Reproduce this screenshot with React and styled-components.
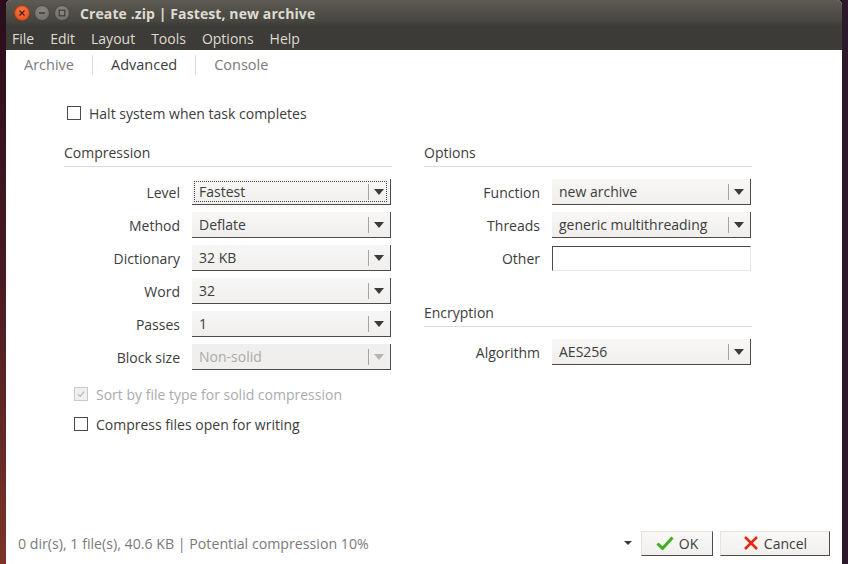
import React from 'react';
import styled, { createGlobalStyle } from 'styled-components';

const GlobalStyle = createGlobalStyle`
  html, body {
    margin: 0;
    padding: 0;
    width: 848px;
    height: 564px;
    overflow: hidden;
    background: linear-gradient(180deg, #2a0d1c 0%, #4a1a22 50%, #7b3427 100%);
    font-family: "Open Sans", "Noto Sans", sans-serif;
  }
`;

const Desktop = styled.div`
  display: flex;
  height: 564px;
`;

const DesktopLeft = styled.div`
  width: 6px;
  flex: none;
`;

const DesktopRight = styled.div`
  width: 6px;
  flex: none;
  background: #2c1a2a;
`;

const Window = styled.div`
  width: 836px;
  display: flex;
  flex-direction: column;
  background: #ffffff;
  border-radius: 5px 5px 0 0;
  overflow: hidden;
`;

const TitleBar = styled.div`
  height: 26px;
  display: flex;
  align-items: center;
  background: linear-gradient(180deg, #5d5b52 0%, #47463f 80%, #3c3b37 100%);
  padding-left: 8px;
  gap: 4px;
`;

const WinButton = styled.div`
  width: 14px;
  height: 14px;
  border-radius: 50%;
  display: flex;
  align-items: center;
  justify-content: center;
  background: ${p => (p.$close ? 'radial-gradient(circle at 50% 35%, #f47a4b, #df4a17)' : 'radial-gradient(circle at 50% 35%, #8a8880, #6b6a64)')};
  border: 1px solid ${p => (p.$close ? '#b13a10' : '#4a4944')};
  flex: none;
`;

const Title = styled.div`
  margin-left: 6px;
  color: #dfdbd2;
  font-weight: 700;
  font-size: 14px;
  letter-spacing: 0.1px;
`;

const MenuBar = styled.div`
  height: 24px;
  display: flex;
  align-items: center;
  background: #3c3b37;
`;

const MenuItem = styled.div`
  color: #dfdbd2;
  font-size: 14px;
  padding: 0 8px;

  &:first-child {
    padding-left: 6px;
  }
`;

const Tabs = styled.div`
  height: 30px;
  display: flex;
  align-items: center;
`;

const Tab = styled.div`
  font-size: 14.5px;
  color: ${p => (p.$active ? '#3c3c3c' : '#7a7a7a')};
  padding: 0 18px;
  border-left: ${p => (p.$first ? 'none' : '1px solid #e0e0e0')};
  height: 20px;
  line-height: 20px;
  display: flex;
  align-items: center;
`;

const Content = styled.div`
  flex: 1;
  display: flex;
  flex-direction: column;
  padding-left: 58px;
`;

const CheckRow = styled.label`
  display: flex;
  align-items: center;
  gap: 8px;
  font-size: 14px;
  color: ${p => (p.$disabled ? '#ababab' : '#3c3c3c')};
  margin-left: ${p => p.$indent || 0}px;
  margin-top: ${p => p.$top || 0}px;
  height: 20px;
`;

const Box = styled.span`
  width: 12px;
  height: 12px;
  border: 1px solid ${p => (p.$disabled ? '#c8c8c8' : '#4a4a4a')};
  background: ${p => (p.$disabled ? '#f0f0f0' : '#ffffff')};
  display: flex;
  align-items: center;
  justify-content: center;
  flex: none;
`;

const Columns = styled.div`
  display: flex;
  gap: 32px;
  margin-top: 20px;
`;

const Column = styled.div`
  width: 328px;
  display: flex;
  flex-direction: column;
`;

const Heading = styled.div`
  font-size: 14px;
  color: #3c3c3c;
  height: 20px;
  line-height: 20px;
  padding-bottom: 3px;
  border-bottom: 1px solid #dadada;
  margin-top: ${p => p.$top || 0}px;
`;

const Fields = styled.div`
  display: flex;
  flex-direction: column;
  gap: 7px;
  margin-top: 12px;
`;

const Field = styled.div`
  display: flex;
  align-items: center;
  gap: 12px;
  height: 26px;
`;

const Label = styled.div`
  width: 116px;
  text-align: right;
  font-size: 14px;
  color: #3c3c3c;
`;

const ComboBox = styled.div`
  position: relative;
  width: 199px;
  height: 26px;
  box-sizing: border-box;
  display: flex;
  align-items: center;
  background: ${p => (p.$disabled ? '#f0efed' : 'linear-gradient(180deg, #f8f7f6 0%, #f0efed 100%)')};
  border-right: 1px solid #4c4b47;
  border-bottom: 1px solid #4c4b47;
  font-size: 14px;
  color: ${p => (p.$disabled ? '#ababab' : '#3c3c3c')};
`;

const ComboText = styled.div`
  flex: 1;
  padding-left: 7px;
  white-space: nowrap;
`;

const Focus = styled.div`
  position: absolute;
  left: 2px;
  top: 2px;
  right: 3px;
  bottom: 2px;
  border: 1px dotted #444;
  pointer-events: none;
`;

const ArrowSep = styled.div`
  width: 1px;
  height: 16px;
  background: #a5a5a5;
  margin-right: 5px;
`;

const Arrow = styled.div`
  width: 0;
  height: 0;
  border-left: 5px solid transparent;
  border-right: 5px solid transparent;
  border-top: 6px solid ${p => (p.$disabled ? '#b5b5b5' : '#3c3b37')};
  margin-right: 6px;
`;

const TextInput = styled.div`
  width: 199px;
  height: 25px;
  box-sizing: border-box;
  background: #ffffff;
  border-left: 1px solid #4c4b47;
  border-top: 1px solid #4c4b47;
  border-right: 1px solid #e6e6e6;
  border-bottom: 1px solid #e6e6e6;
`;

const StatusBar = styled.div`
  height: 42px;
  display: flex;
  align-items: center;
  padding: 0 12px;
`;

const StatusText = styled.div`
  flex: 1;
  font-size: 14.2px;
  color: #7a7a7a;
`;

const SmallArrow = styled.div`
  width: 0;
  height: 0;
  border-left: 4px solid transparent;
  border-right: 4px solid transparent;
  border-top: 4px solid #3c3b37;
  margin-right: 9px;
`;

const Button = styled.div`
  width: ${p => p.$w}px;
  height: 25px;
  box-sizing: border-box;
  display: flex;
  align-items: center;
  justify-content: center;
  gap: 5px;
  background: linear-gradient(180deg, #f9f8f7 0%, #f1f0ee 100%);
  border-right: 1px solid #4c4b47;
  border-bottom: 1px solid #4c4b47;
  border-top: 1px solid #e4e3e0;
  border-left: 1px solid #e4e3e0;
  font-size: 14px;
  color: #3c3c3c;
  margin-left: ${p => p.$ml || 0}px;
`;

function Combo({ value, disabled, focused }) {
  return (
    <ComboBox $disabled={disabled}>
      <ComboText>{value}</ComboText>
      <ArrowSep />
      <Arrow $disabled={disabled} />
      {focused && <Focus />}
    </ComboBox>
  );
}

function Row({ label, children }) {
  return (
    <Field>
      <Label>{label}</Label>
      {children}
    </Field>
  );
}

export default function App() {
  return (
    <>
      <GlobalStyle />
      <Desktop>
        <DesktopLeft />
        <Window>
          <TitleBar>
            <WinButton $close>
              <svg width="8" height="8" viewBox="0 0 8 8">
                <path d="M1.5 1.5 L6.5 6.5 M6.5 1.5 L1.5 6.5" stroke="#5a1a05" strokeWidth="1.3" />
              </svg>
            </WinButton>
            <WinButton>
              <svg width="8" height="8" viewBox="0 0 8 8">
                <path d="M1 4 H7" stroke="#3c3b37" strokeWidth="1.4" />
              </svg>
            </WinButton>
            <WinButton>
              <svg width="8" height="8" viewBox="0 0 8 8">
                <rect x="1.2" y="1.2" width="5.6" height="5.6" fill="none" stroke="#3c3b37" strokeWidth="1.2" />
              </svg>
            </WinButton>
            <Title>Create .zip | Fastest, new archive</Title>
          </TitleBar>
          <MenuBar>
            {['File', 'Edit', 'Layout', 'Tools', 'Options', 'Help'].map(m => (
              <MenuItem key={m}>{m}</MenuItem>
            ))}
          </MenuBar>
          <Tabs>
            <Tab $first>Archive</Tab>
            <Tab $active>Advanced</Tab>
            <Tab>Console</Tab>
          </Tabs>
          <Content>
            <CheckRow $indent={3} $top={23}>
              <Box />
              Halt system when task completes
            </CheckRow>
            <Columns>
              <Column>
                <Heading>Compression</Heading>
                <Fields>
                  <Row label="Level"><Combo value="Fastest" focused /></Row>
                  <Row label="Method"><Combo value="Deflate" /></Row>
                  <Row label="Dictionary"><Combo value="32 KB" /></Row>
                  <Row label="Word"><Combo value="32" /></Row>
                  <Row label="Passes"><Combo value="1" /></Row>
                  <Row label="Block size"><Combo value="Non-solid" disabled /></Row>
                </Fields>
                <CheckRow $disabled $indent={10} $top={14}>
                  <Box $disabled>
                    <svg width="10" height="10" viewBox="0 0 10 10">
                      <path d="M2 5.2 L4.2 7.4 L8.2 2.6" fill="none" stroke="#b8b8b8" strokeWidth="1.3" />
                    </svg>
                  </Box>
                  Sort by file type for solid compression
                </CheckRow>
                <CheckRow $indent={10} $top={10}>
                  <Box />
                  Compress files open for writing
                </CheckRow>
              </Column>
              <Column>
                <Heading>Options</Heading>
                <Fields>
                  <Row label="Function"><Combo value="new archive" /></Row>
                  <Row label="Threads"><Combo value="generic multithreading" /></Row>
                  <Row label="Other"><TextInput /></Row>
                </Fields>
                <Heading $top={32}>Encryption</Heading>
                <Fields>
                  <Row label="Algorithm"><Combo value="AES256" /></Row>
                </Fields>
              </Column>
            </Columns>
          </Content>
          <StatusBar>
            <StatusText>0 dir(s), 1 file(s), 40.6 KB | Potential compression 10%</StatusText>
            <SmallArrow />
            <Button $w={72}>
              <svg width="18" height="16" viewBox="0 0 18 16">
                <path d="M1.5 8.5 L6.5 13.5 L16.5 2.5" fill="none" stroke="#3fae1e" strokeWidth="3" strokeLinejoin="round" />
              </svg>
              OK
            </Button>
            <Button $w={110} $ml={7}>
              <svg width="16" height="16" viewBox="0 0 16 16">
                <path d="M2 2 L14 14 M14 2 L2 14" stroke="#e32b12" strokeWidth="2.6" />
              </svg>
              Cancel
            </Button>
          </StatusBar>
        </Window>
        <DesktopRight />
      </Desktop>
    </>
  );
}
